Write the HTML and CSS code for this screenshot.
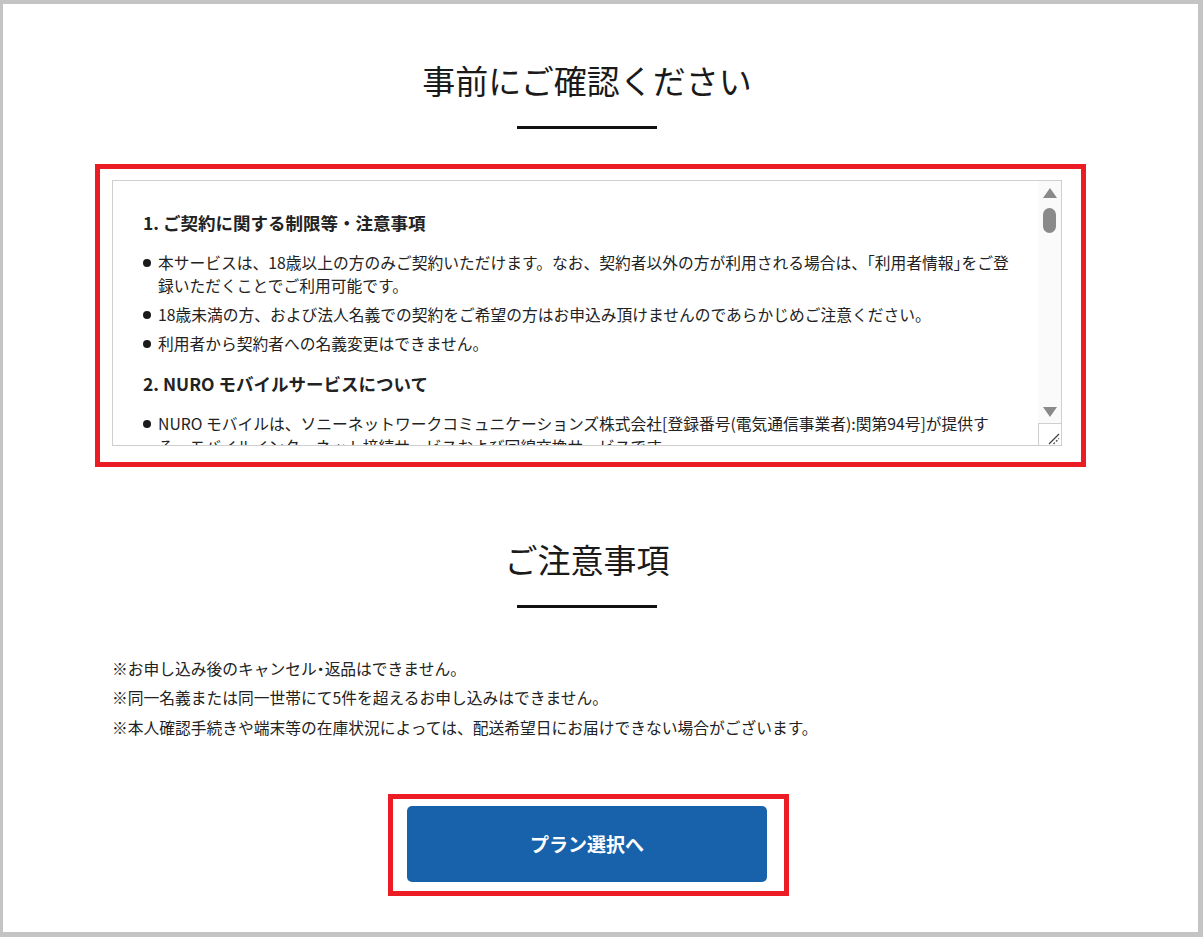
FILE: index.html
```html
<!DOCTYPE html>
<html lang="ja">
<head>
<meta charset="utf-8">
<title>事前にご確認ください</title>
<link rel="stylesheet" href="styles.css">
</head>
<body>
<div class="frame">
  <main class="page">
    <section class="confirm">
      <h2 class="section-title">事前にご確認ください</h2>
      <div class="highlight highlight--terms">
        <div class="terms">
          <div class="terms-body">
            <h3>1. ご契約に関する制限等・注意事項</h3>
            <ul>
              <li>本サービスは、18歳以上の方のみご契約いただけます。なお、契約者以外の方が利用される場合は、<span class="half">「</span>利用者情報<span class="half">」</span>をご登<br>録いただくことでご利用可能です。</li>
              <li>18歳未満の方、および法人名義での契約をご希望の方はお申込み頂けませんのであらかじめご注意ください。</li>
              <li>利用者から契約者への名義変更はできません。</li>
            </ul>
            <h3>2. NURO モバイルサービスについて</h3>
            <ul>
              <li>NURO モバイルは、ソニーネットワークコミュニケーションズ株式会社[登録番号(電気通信事業者):関第94号]が提供す<br>る、モバイルインターネット接続サービスおよび回線交換サービスです。</li>
            </ul>
          </div>
          <div class="scrollbar" aria-hidden="true">
            <span class="sb-up"></span>
            <span class="sb-thumb"></span>
            <span class="sb-down"></span>
            <span class="sb-corner">
              <svg width="22" height="22" viewBox="0 0 22 22">
                <line x1="10" y1="21" x2="20" y2="11" stroke="#444" stroke-width="1.2"/>
                <line x1="14.5" y1="21" x2="20" y2="15.5" stroke="#444" stroke-width="1.2" stroke-dasharray="2 1.5"/>
              </svg>
            </span>
          </div>
        </div>
      </div>
    </section>

    <section class="caution">
      <h2 class="section-title">ご注意事項</h2>
      <div class="notes">
        <p>※お申し込み後のキャンセル<span class="half">・</span>返品はできません。</p>
        <p>※同一名義または同一世帯にて5件を超えるお申し込みはできません。</p>
        <p>※本人確認手続きや端末等の在庫状況によっては、配送希望日にお届けできない場合がございます。</p>
      </div>
      <div class="actions">
        <div class="highlight highlight--action">
          <a class="btn-primary" href="#plan">プラン選択へ</a>
        </div>
      </div>
    </section>
  </main>
</div>
</body>
</html>
```

FILE: styles.css
```css
* {
  box-sizing: border-box;
}

html,
body {
  margin: 0;
  padding: 0;
}

body {
  font-family: "Noto Sans CJK JP", "Noto Sans", sans-serif;
  color: #222;
  background: #fff;
}

/* outer window frame */
.frame {
  height: 937px;
  border-style: solid;
  border-color: #c4c4c4;
  border-width: 4px 5px 5px 3px;
  overflow: hidden;
  background: #fff;
}

.page {
  width: 950px;
  margin-left: 109px;
}

/* half-width punctuation */
.half {
  font-feature-settings: "halt" 1;
}

/* section headings with a short rule below */
.section-title {
  margin: 0;
  font-size: 33px;
  font-weight: 400;
  line-height: 40px;
  text-align: center;
  color: #1a1a1a;
}

.section-title::after {
  content: "";
  display: block;
  width: 140px;
  height: 3px;
  margin: 26px auto 0;
  background: #111;
}

.confirm .section-title {
  margin-top: 56px;
}

.caution .section-title {
  margin-top: 72px;
}

/* red emphasis outline */
.highlight {
  border: 5px solid #ec1c24;
}

.highlight--terms {
  width: 991px;
  margin: 35px 0 0 -17px;
  padding: 11px 19px 16px 12px;
}

/* scrolling terms box */
.terms {
  display: flex;
  height: 266px;
  border: 1px solid #cfcfcf;
  background: #fff;
}

.terms-body {
  flex: 1;
  overflow: hidden;
  padding: 28.5px 20px 0 30px;
}

.terms h3 {
  margin: 0 0 15px;
  font-size: 17.5px;
  line-height: 26px;
  font-weight: 700;
  color: #222;
}

.terms ul {
  list-style: none;
  margin: 0 0 15px;
  padding: 0;
}

.terms li {
  position: relative;
  padding-left: 15px;
  margin-bottom: 5.5px;
  font-size: 15.75px;
  line-height: 23.5px;
  white-space: nowrap;
}

.terms li::before {
  content: "";
  position: absolute;
  left: 0;
  top: 8px;
  width: 8px;
  height: 8px;
  border-radius: 50%;
  background: #1a1a1a;
}

/* scrollbar drawn beside the text */
.scrollbar {
  width: 23px;
  flex: none;
  display: flex;
  flex-direction: column;
  align-items: center;
  background: #fafafa;
}

.sb-up {
  margin-top: 7px;
  width: 0;
  height: 0;
  border-left: 7px solid transparent;
  border-right: 7px solid transparent;
  border-bottom: 10px solid #8a8a8a;
}

.sb-thumb {
  margin-top: 10px;
  width: 13px;
  height: 25px;
  border-radius: 7px;
  background: #8a8a8a;
}

.sb-down {
  margin-top: auto;
  width: 0;
  height: 0;
  border-left: 7px solid transparent;
  border-right: 7px solid transparent;
  border-top: 10px solid #8a8a8a;
}

.sb-corner {
  align-self: stretch;
  display: flex;
  align-items: flex-end;
  justify-content: flex-end;
  height: 22px;
  margin-top: 6px;
  border-top: 1px solid #cfcfcf;
  border-left: 1px solid #cfcfcf;
  background: #fff;
}

.sb-corner svg {
  display: block;
}

/* notes */
.notes {
  margin-top: 48.5px;
}

.notes p {
  margin: 0 0 6px;
  font-size: 15.75px;
  line-height: 23.5px;
}

.notes p:last-child {
  margin-bottom: 0;
}

/* call to action */
.actions {
  display: flex;
  justify-content: center;
  margin-top: 54.75px;
}

.highlight--action {
  margin-left: 3px;
  padding: 7px 17px 9px 14px;
}

.btn-primary {
  display: flex;
  align-items: center;
  justify-content: center;
  width: 360px;
  height: 76px;
  border-radius: 5px;
  background: #1862ab;
  color: #fff;
  font-size: 19px;
  font-weight: 700;
  text-decoration: none;
}
```
